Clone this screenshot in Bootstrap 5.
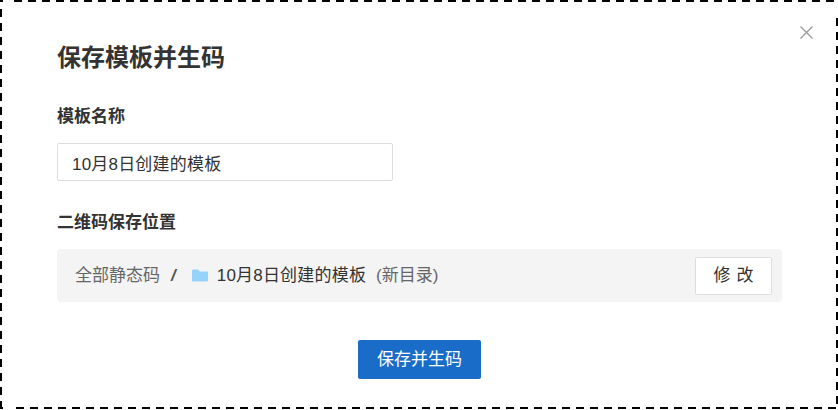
<!DOCTYPE html>
<html lang="zh-CN">
<head>
<meta charset="utf-8">
<title>保存模板并生码</title>
<link href="https://cdn.jsdelivr.net/npm/bootstrap@5.3.0/dist/css/bootstrap.min.css" rel="stylesheet">
<style>
html, body { margin: 0; height: 410px; overflow: hidden; background: #fff; }
body { font-family: "Liberation Sans", "Noto Sans CJK SC", sans-serif; color: #333; }
.frame { position: relative; width: 838px; height: 409px; padding: 0 56px 0 57px; }
.frame-line { position: absolute; inset: 0; width: 838px; height: 409px; pointer-events: none; }
.dlg-title { font-size: 24px; line-height: 32px; font-weight: 700; color: #333; margin: 0; padding-top: 42px; }
.dlg-label { display: block; font-size: 17px; line-height: 22px; font-weight: 700; color: #333; margin: 0; }
.lbl-one { margin-top: 32px; }
.lbl-two { margin-top: 31px; }
.name-input { width: 336px; height: 38px; margin-top: 15px; padding: 0 14px; font-size: 17px; letter-spacing: .2px; color: #333; border: 1px solid #ddd; border-radius: 2px; box-shadow: none; }
.path-bar { height: 53px; margin-top: 15px; padding: 0 10px 0 18px; background: #f4f4f4; border-radius: 4px; font-size: 17px; }
.crumb-root { color: #666; }
.crumb-sep { color: #555; font-weight: 700; margin: 0 16px 0 11px; font-style: italic; }
.crumb-name { color: #333; margin-left: 9px; letter-spacing: .2px; }
.crumb-note { color: #666; margin-left: 10px; }
.edit-btn { width: 77px; height: 38px; padding: 0 0 0 6px; font-size: 17px; color: #333; background: #fff; border: 1px solid #ddd; border-radius: 2px; letter-spacing: 6px; }
.save-btn { width: 123px; height: 39px; padding: 0; font-size: 17px; color: #fff; background: #196cc8; border: 0; border-radius: 2px; }
.save-row { margin-top: 38px; }
.close-x { position: absolute; top: 26px; right: 25px; width: 13px; height: 13px; line-height: 0; padding: 0; background: none; border: 0; }
</style>
</head>
<body>
<div class="frame">
  <svg class="frame-line" viewBox="0 0 838 409" aria-hidden="true" fill="none" stroke="#000" stroke-width="2">
    <path d="M0 1H3"/>
    <path d="M14 1H834" stroke-dasharray="8 6"/>
    <path d="M837 18V404" stroke-dasharray="8 6"/>
    <path d="M16 408H836" stroke-dasharray="8 6"/>
    <path d="M0 408H3"/>
    <path d="M1 9V408" stroke-dasharray="8 6"/>
  </svg>
  <button type="button" class="close-x" aria-label="关闭">
    <svg width="13" height="13" viewBox="0 0 13 13"><path d="M.5 .5L12.5 12.5M12.5 .5L.5 12.5" stroke="#999" stroke-width="1.3" fill="none"/></svg>
  </button>
  <h1 class="dlg-title">保存模板并生码</h1>
  <label class="dlg-label lbl-one" for="tplName">模板名称</label>
  <input id="tplName" class="form-control name-input" type="text" value="10月8日创建的模板">
  <div class="dlg-label lbl-two">二维码保存位置</div>
  <div class="path-bar d-flex align-items-center">
    <span class="crumb-root">全部静态码</span>
    <span class="crumb-sep">/</span>
    <svg width="16" height="13" viewBox="0 0 16 13" aria-hidden="true"><path d="M0 1.5Q0 .5 1 .5H6L8 2.5H15Q16 2.5 16 3.5V11.5Q16 12.5 15 12.5H1Q0 12.5 0 11.5Z" fill="#95d3fb"/></svg>
    <span class="crumb-name">10月8日创建的模板</span>
    <span class="crumb-note">(新目录)</span>
    <button type="button" class="btn edit-btn ms-auto">修改</button>
  </div>
  <div class="save-row d-flex justify-content-center">
    <button type="button" class="btn save-btn">保存并生码</button>
  </div>
</div>
<script src="https://cdn.jsdelivr.net/npm/bootstrap@5.3.0/dist/js/bootstrap.bundle.min.js"></script>
</body>
</html>
